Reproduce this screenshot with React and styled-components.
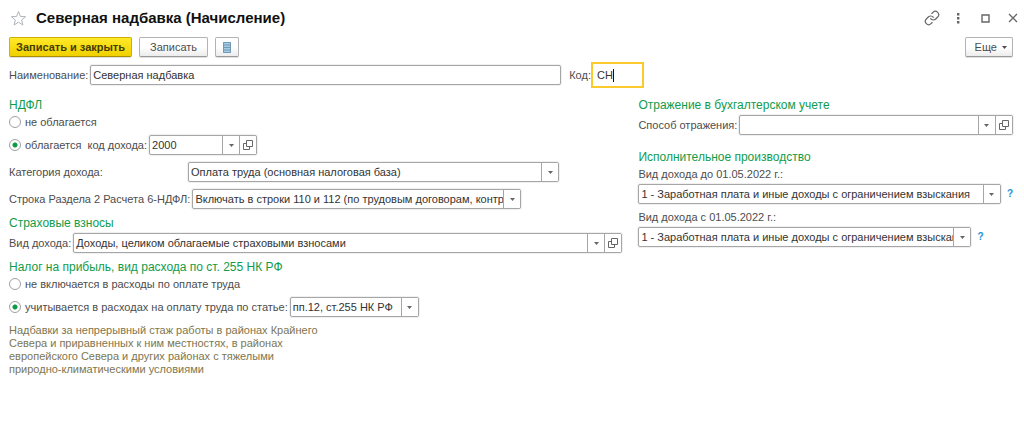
import React from "react";

import styled, { createGlobalStyle, css } from "styled-components";

const GlobalStyle = createGlobalStyle`
    *, *::before, *::after {
        box-sizing: border-box;
    }

    body {
        margin: 0;
        background: #fff;
        color: #4d4d4d;
        font-family: "Liberation Sans", Arial, sans-serif;
        font-size: 11px;
        line-height: 18px;
    }

    button, input, select {
        margin: 0;
        font: inherit;
        color: inherit;
    }
`;

const Window = styled.main`
    display: flex;
    flex-direction: column;
    padding: 8px 11px 16px 9px;
`;

const TitleBar = styled.header`
    display: flex;
    align-items: center;
    height: 20px;
    margin-right: -8px;
`;

const Title = styled.h1`
    flex: 1;
    margin: 0 0 0 8px;
    color: #111;
    font-size: 15px;
    font-weight: 700;
    line-height: 20px;
`;

const WindowActions = styled.div`
    display: flex;
    align-items: center;
    gap: 10px;
`;

const IconButton = styled.button`
    display: flex;
    align-items: center;
    justify-content: center;
    width: 17px;
    height: 20px;
    padding: 0;
    border: 0;
    background: none;
    color: #666;
`;

const StarButton = styled(IconButton)`
    width: 19px;
    color: #b0b5ba;
`;

const Toolbar = styled.div`
    display: flex;
    gap: 7px;
    margin-top: 9px;
`;

const Button = styled.button`
    display: flex;
    align-items: center;
    justify-content: center;
    gap: 5px;
    height: 20px;
    padding: 0 ${({ $pad }) => $pad || 10}px;
    border: 1px solid #b3b3b3;
    border-bottom-color: #999;
    border-radius: 2px;
    background: linear-gradient(#fff 50%, #ececec);
    box-shadow: 0 1px 0 #e0e0e0;

    ${({ $primary }) => $primary && css`
        border-color: #cfb000;
        border-bottom-color: #a89000;
        background: linear-gradient(#ffe927, #f0d000);
        color: #443c00;
        font-weight: 700;
    `}

    ${({ $last }) => $last && css`
        margin-left: auto;
        padding: 0 5px 0 9px;
    `}
`;

const NameRow = styled.div`
    display: flex;
    align-items: center;
    gap: 8px;
    height: 26px;
    margin-top: 5px;
`;

const NameGroup = styled.div`
    display: flex;
    align-items: center;
    gap: 2px;
    width: 55%;
`;

const CodeGroup = styled.div`
    display: flex;
    align-items: center;
`;

const Columns = styled.div`
    display: grid;
    grid-template-columns: 614fr 375fr;
    gap: 16px;
    margin-top: 9px;
`;

const Column = styled.div`
    min-width: 0;
`;

const Section = styled.section`
    margin-top: ${({ $gap }) => $gap || 0}px;
`;

const SectionTitle = styled.h2`
    margin: 0;
    color: #119c4b;
    font-size: 12px;
    font-weight: 400;
    line-height: 16px;
`;

const Row = styled.div`
    display: flex;
    align-items: center;
    gap: ${({ $between }) => $between || 2}px;
    margin-top: ${({ $gap }) => $gap || 0}px;
`;

const Label = styled.label`
    flex: none;
    min-width: ${({ $width }) => ($width ? `${$width}px` : "auto")};
    white-space: nowrap;
`;

const RadioLabel = styled.label`
    display: flex;
    align-items: center;
    gap: 4px;
    margin-right: ${({ $gap }) => $gap || 0}px;
    white-space: nowrap;
`;

const Radio = styled.input`
    appearance: none;
    width: 12px;
    height: 12px;
    border: 1px solid #a0a0a0;
    border-radius: 50%;
    background: #fff;

    &:checked {
        background: radial-gradient(circle, #0a9b45 2px, #fff 3px);
    }
`;

const frame = css`
    height: 20px;
    border: 1px solid #a6a6a6;
    border-radius: 2px;
    background: #fff;
    box-shadow: 0 0 0 1px #f0f0f0;
    color: #333;
    overflow: hidden;
`;

const TextInput = styled.input`
    ${frame}
    flex: 1;
    min-width: 0;
    padding: 0 2px;
    outline: none;
`;

const CodeBox = styled.div`
    display: flex;
    align-items: center;
    width: 53px;
    height: 26px;
    padding: 0 4px;
    border: 2px solid #fbcb2e;
    background: #fff;
    color: #333;
`;

const CodeInput = styled.input`
    field-sizing: content;
    padding: 0;
    border: 0;
    outline: none;
    background: none;
    caret-color: transparent;
`;

const Caret = styled.span`
    width: 1px;
    height: 13px;
    background: #111;
`;

const Combo = styled.div`
    ${frame}
    display: flex;
    flex: ${({ $width }) => ($width ? `0 1 ${$width}px` : "1")};
    min-width: 0;
`;

const ComboInput = styled.input`
    flex: 1;
    width: 0;
    min-width: 0;
    padding: 0 2px;
    border: 0;
    outline: none;
    background: none;
`;

const ComboButton = styled.button`
    display: flex;
    flex: none;
    align-items: center;
    justify-content: center;
    width: 17px;
    padding: 0;
    border: 0;
    border-left: 1px solid #a6a6a6;
    background: #fff;
    color: #666;
`;

const SelectBox = styled.div`
    ${frame}
    display: grid;
    grid-template-columns: minmax(0, 1fr);
    flex: 0 1 ${({ $width }) => $width}px;
    min-width: 0;
`;

const Select = styled.select`
    grid-area: 1 / 1;
    appearance: none;
    height: 18px;
    padding: 0 0 0 2px;
    border: 0;
    outline: none;
    background: none;
`;

/* sits in the same grid cell as the select and lets clicks through */
const SelectArrow = styled.span`
    grid-area: 1 / 1;
    justify-self: end;
    display: flex;
    align-items: center;
    justify-content: center;
    width: 17px;
    border-left: 1px solid #a6a6a6;
    background: #fff;
    color: #666;
    pointer-events: none;
`;

const Help = styled.button`
    padding: 0;
    border: 0;
    background: none;
    color: #2492d6;
    font-size: 10px;
    font-weight: 700;
`;

const Note = styled.p`
    max-width: 310px;
    margin: 7px 0 0;
    color: #7d7650;
    line-height: 13px;
`;

const StarIcon = () => (
    <svg width="17" height="17" viewBox="0 0 17 17" fill="none" stroke="currentColor" aria-hidden="true">
        <path d="M8.5 1.5 10.4 6.4 15.6 6.7 11.6 10 12.9 15 8.5 12.2 4.1 15 5.4 10 1.4 6.7 6.6 6.4Z" />
    </svg>
);

const LinkIcon = () => (
    <svg width="16" height="16" viewBox="0 0 24 24" fill="none" stroke="currentColor" strokeWidth="1.8" strokeLinecap="round" aria-hidden="true">
        <path d="M10 13a5 5 0 0 0 7.54.54l3-3a5 5 0 0 0-7.07-7.07l-1.72 1.71" />
        <path d="M14 11a5 5 0 0 0-7.54-.54l-3 3a5 5 0 0 0 7.07 7.07l1.71-1.71" />
    </svg>
);

const DotsIcon = () => (
    <svg width="3" height="11" viewBox="0 0 3 11" fill="currentColor" aria-hidden="true">
        <path d="M0 0h2.4v2.4H0zM0 4h2.4v2.4H0zM0 8h2.4v2.4H0z" />
    </svg>
);

const MaximizeIcon = () => (
    <svg width="9" height="9" viewBox="0 0 9 9" fill="none" stroke="currentColor" strokeWidth="1.4" aria-hidden="true">
        <path d="M1 1h7v7H1z" />
    </svg>
);

const CloseIcon = () => (
    <svg width="10" height="10" viewBox="0 0 10 10" stroke="currentColor" strokeWidth="1.3" aria-hidden="true">
        <path d="M1 1 9 9M9 1 1 9" />
    </svg>
);

const ListIcon = () => (
    <svg width="8" height="11" viewBox="0 0 8 11" aria-hidden="true">
        <path fill="#a9c9df" d="M0 0h8v11H0z" />
        <path fill="none" stroke="#6f9ab8" d="M.5.5h7v10h-7zM1 3h6M1 5.5h6M1 8h6" />
    </svg>
);

const ArrowIcon = () => (
    <svg width="5" height="3" viewBox="0 0 5 3" fill="currentColor" aria-hidden="true">
        <path d="M0 0h5L2.5 3z" />
    </svg>
);

const OpenIcon = () => (
    <svg width="10" height="10" viewBox="0 0 10 10" fill="none" stroke="currentColor" aria-hidden="true">
        <path d="M3.5 .5h6v6h-6zM3.5 3.5h-3v6h6v-3" />
    </svg>
);

const ComboField = ({ id, value, width }) => (
    <Combo $width={width}>
        <ComboInput id={id} defaultValue={value} />
        <ComboButton type="button" aria-label="Выбрать"><ArrowIcon /></ComboButton>
        <ComboButton type="button" aria-label="Открыть"><OpenIcon /></ComboButton>
    </Combo>
);

const SelectField = ({ id, value, width, label }) => (
    <SelectBox $width={width}>
        <Select id={id} aria-label={label}>
            <option>{value}</option>
        </Select>
        <SelectArrow><ArrowIcon /></SelectArrow>
    </SelectBox>
);

const restrictedIncome = "1 - Заработная плата и иные доходы с ограничением взыскания";

const App = () => {
    return (
        <Window>
            <GlobalStyle />
            <TitleBar>
                <StarButton type="button" aria-label="В избранное"><StarIcon /></StarButton>
                <Title>Северная надбавка (Начисление)</Title>
                <WindowActions>
                    <IconButton type="button" aria-label="Ссылка"><LinkIcon /></IconButton>
                    <IconButton type="button" aria-label="Меню"><DotsIcon /></IconButton>
                    <IconButton type="button" aria-label="Развернуть"><MaximizeIcon /></IconButton>
                    <IconButton type="button" aria-label="Закрыть"><CloseIcon /></IconButton>
                </WindowActions>
            </TitleBar>

            <Toolbar>
                <Button type="button" $primary $pad={6}>Записать и закрыть</Button>
                <Button type="button">Записать</Button>
                <Button type="button" $pad={7} aria-label="Список"><ListIcon /></Button>
                <Button type="button" $last>Еще <ArrowIcon /></Button>
            </Toolbar>

            <NameRow>
                <NameGroup>
                    <Label htmlFor="name">Наименование:</Label>
                    <TextInput id="name" defaultValue="Северная надбавка" />
                </NameGroup>
                <CodeGroup>
                    <Label htmlFor="code">Код:</Label>
                    <CodeBox>
                        <CodeInput id="code" defaultValue="СН" />
                        <Caret />
                    </CodeBox>
                </CodeGroup>
            </NameRow>

            <Columns>
                <Column>
                    <Section>
                        <SectionTitle>НДФЛ</SectionTitle>
                        <RadioLabel>
                            <Radio type="radio" name="ndfl" />
                            не облагается
                        </RadioLabel>
                        <Row $gap={4}>
                            <RadioLabel $gap={4}>
                                <Radio type="radio" name="ndfl" defaultChecked />
                                облагается
                            </RadioLabel>
                            <Label htmlFor="incomeCode">код дохода:</Label>
                            <ComboField id="incomeCode" value="2000" width={108} />
                        </Row>
                        <Row $gap={7}>
                            <Label htmlFor="category" $width={177}>Категория дохода:</Label>
                            <SelectField id="category" value="Оплата труда (основная налоговая база)" width={371} />
                        </Row>
                        <Row $gap={7}>
                            <Label htmlFor="line" $width={177}>Строка Раздела 2 Расчета 6-НДФЛ:</Label>
                            <SelectField id="line" value="Включать в строки 110 и 112 (по трудовым договорам, контрактам)" width={329} />
                        </Row>
                    </Section>

                    <Section $gap={6}>
                        <SectionTitle>Страховые взносы</SectionTitle>
                        <Row $gap={2}>
                            <Label htmlFor="insurance">Вид дохода:</Label>
                            <ComboField id="insurance" value="Доходы, целиком облагаемые страховыми взносами" />
                        </Row>
                    </Section>

                    <Section $gap={6}>
                        <SectionTitle>Налог на прибыль, вид расхода по ст. 255 НК РФ</SectionTitle>
                        <RadioLabel>
                            <Radio type="radio" name="profit" />
                            не включается в расходы по оплате труда
                        </RadioLabel>
                        <Row $gap={4}>
                            <RadioLabel>
                                <Radio type="radio" name="profit" defaultChecked />
                                учитывается в расходах на оплату труда по статье:
                            </RadioLabel>
                            <SelectField label="Статья" value="пп.12, ст.255 НК РФ" width={129} />
                        </Row>
                        <Note>
                            Надбавки за непрерывный стаж работы в районах Крайнего
                            Севера и приравненных к ним местностях, в районах
                            европейского Севера и других районах с тяжелыми
                            природно-климатическими условиями
                        </Note>
                    </Section>
                </Column>

                <Column>
                    <Section>
                        <SectionTitle>Отражение в бухгалтерском учете</SectionTitle>
                        <Row $gap={2}>
                            <Label htmlFor="reflection">Способ отражения:</Label>
                            <ComboField id="reflection" value="" />
                        </Row>
                    </Section>

                    <Section $gap={14}>
                        <SectionTitle>Исполнительное производство</SectionTitle>
                        <Row>
                            <Label htmlFor="before">Вид дохода до 01.05.2022 г.:</Label>
                        </Row>
                        <Row $gap={1} $between={6}>
                            <SelectField id="before" value={restrictedIncome} width={365} />
                            <Help type="button">?</Help>
                        </Row>
                        <Row $gap={4}>
                            <Label htmlFor="after">Вид дохода с 01.05.2022 г.:</Label>
                        </Row>
                        <Row $gap={1} $between={6}>
                            <SelectField id="after" value={restrictedIncome} width={333} />
                            <Help type="button">?</Help>
                        </Row>
                    </Section>
                </Column>
            </Columns>
        </Window>
    );
}

export default App
